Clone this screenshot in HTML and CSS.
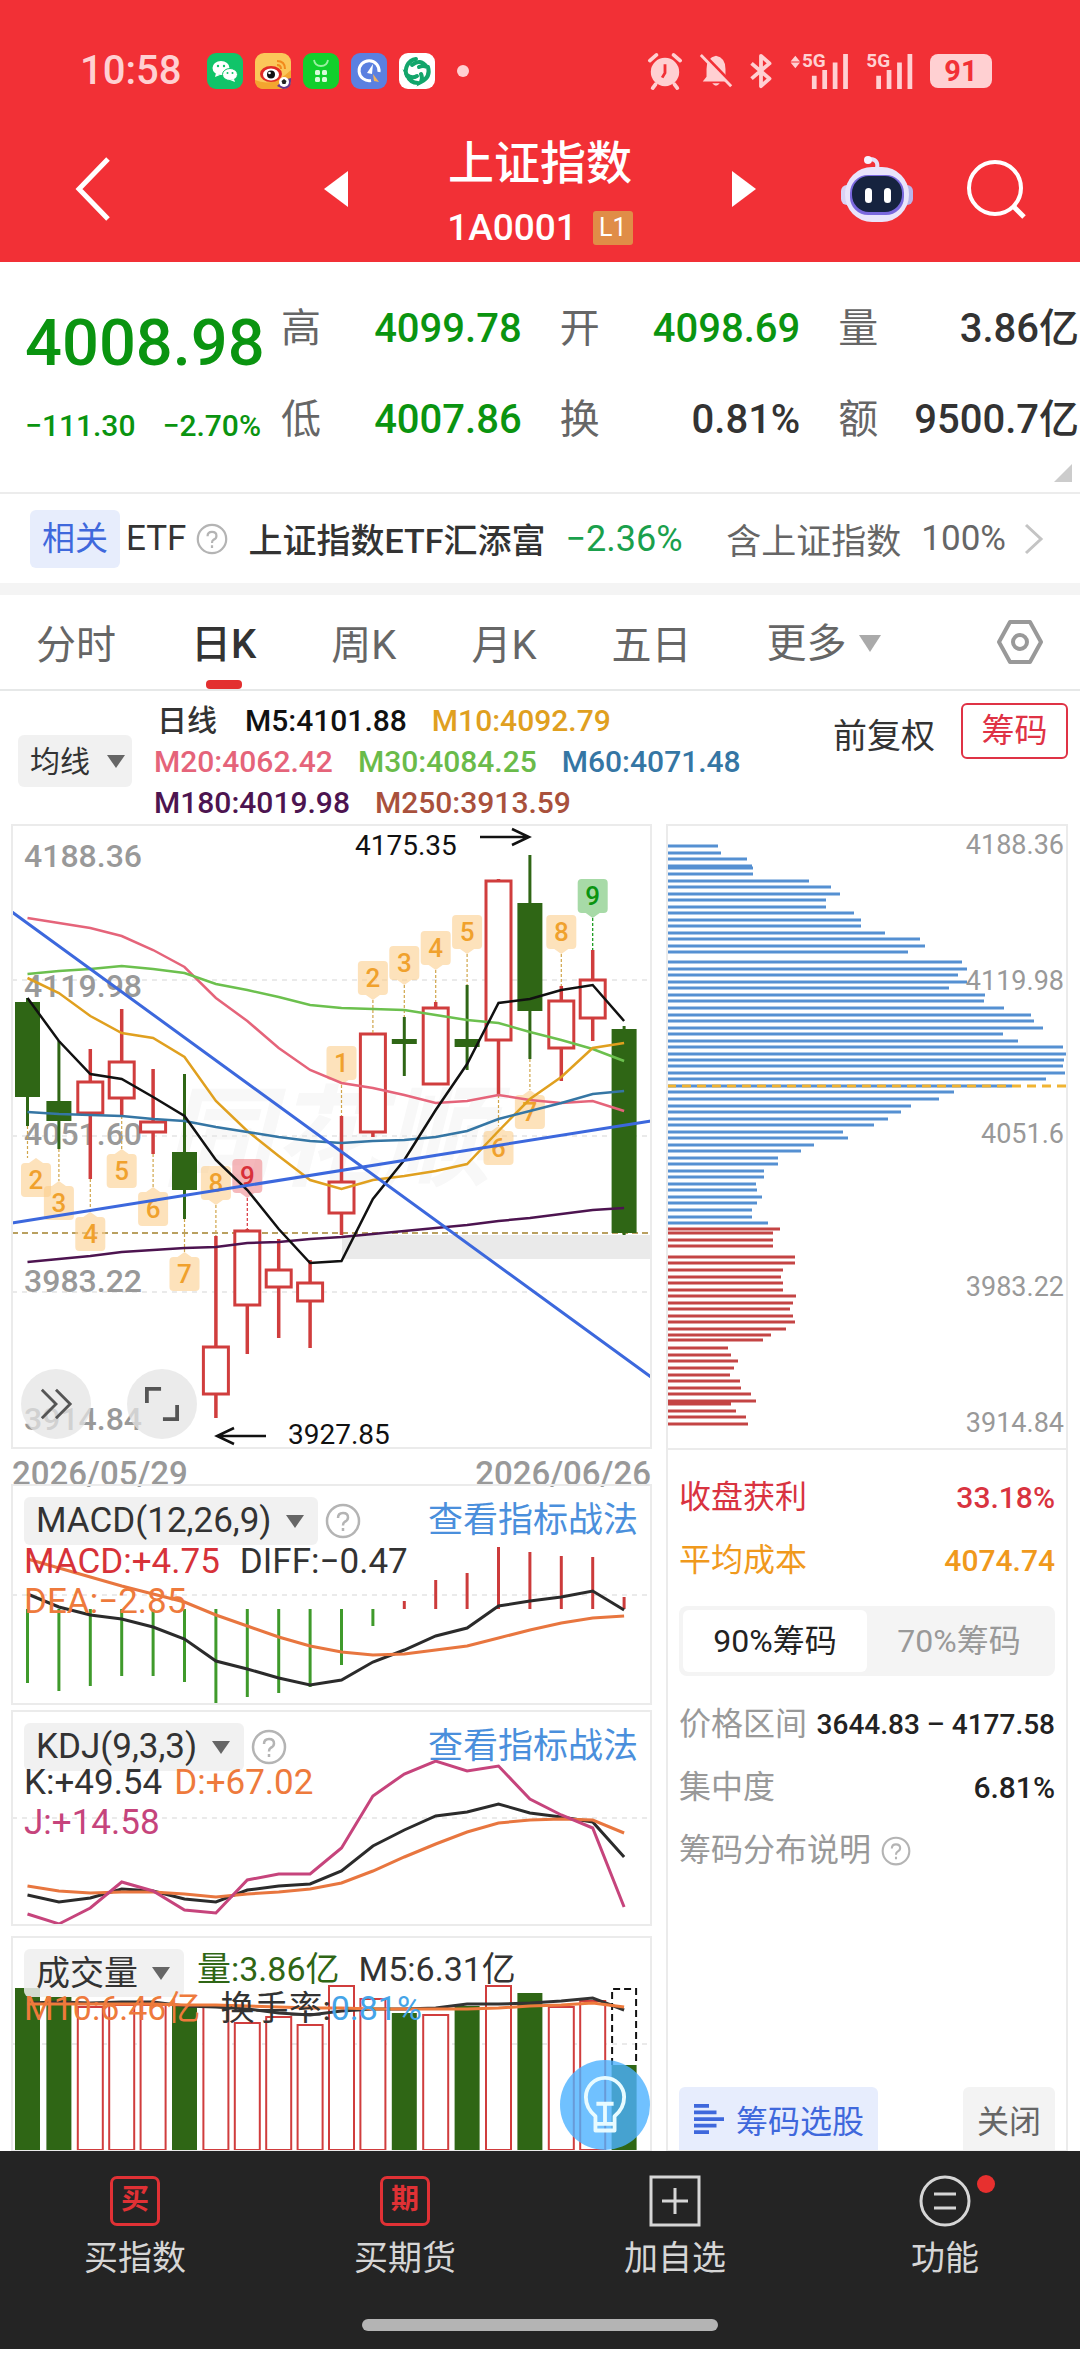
FILE: index.html
```html
<!DOCTYPE html>
<html lang="zh-CN">
<head>
    <meta charset="UTF-8">
    <meta name="viewport" content="width=device-width, initial-scale=1.0">
    <title>上证指数 1A0001</title>
    <link rel="stylesheet" href="styles.css">
</head>
<body>
    <header class="top">
        <div class="status">
            <span class="clock">10:58</span>
            <div class="apps">
                <svg viewBox="0 0 36 36"><rect width="36" height="36" rx="9" fill="#10c469"/><ellipse cx="14" cy="15" rx="8.500" ry="7" fill="#fff"/><ellipse cx="23" cy="21.500" rx="7.500" ry="6" fill="#fff" stroke="#10c469"/><path d="M9 20l-1 4 5-2zM27 26l1 3-5-2z" fill="#fff"/><g fill="#10c469"><circle cx="11" cy="13" r="1.200"/><circle cx="17" cy="13" r="1.200"/><circle cx="20.500" cy="20" r="1"/><circle cx="25.500" cy="20" r="1"/></g></svg>
                <svg viewBox="0 0 36 36"><rect width="36" height="36" rx="9" fill="#fbc75a"/><path d="M0 27q18 8 36-10v10q0 9-9 9H9q-9 0-9-9z" fill="#f3a52f"/><path d="M22 33q6-7 14-8v3q0 8-8 8z" fill="#6a3a8c"/><ellipse cx="16" cy="21" rx="11" ry="8" fill="#e12a26"/><ellipse cx="16" cy="21.500" rx="8" ry="6" fill="#fff"/><circle cx="16" cy="21.500" r="4" fill="#111"/><circle cx="14.500" cy="20" r="1.300" fill="#fff"/><path d="M22 8q8 0 8 8M22 12q4 0 4 4" fill="none" stroke="#f28a1c" stroke-width="2"/><circle cx="29" cy="29" r="5" fill="#fff"/><path d="M29 26l2.500 2-1 3h-3l-1-3z" fill="#222"/></svg>
                <svg viewBox="0 0 36 36"><rect width="36" height="36" rx="9" fill="#12cf2c"/><path d="M11 7q1 6 7 6t7-6" fill="none" stroke="#9bf0a2" stroke-width="1.800"/><g fill="#d8fbda"><rect x="12" y="17" width="5" height="5" rx="1.500"/><rect x="19" y="17" width="5" height="5" rx="1.500"/><rect x="12" y="24" width="5" height="5" rx="1.500"/><rect x="19" y="24" width="5" height="5" rx="1.500"/></g></svg>
                <svg viewBox="0 0 36 36"><rect width="36" height="36" rx="9" fill="#5b80e0"/><path d="M20 27.500A10 10 0 1 1 28 19" fill="none" stroke="#fff" stroke-width="3"/><path d="M22 11l-6 9 5 1z" fill="#fff"/><path d="M22 21l6 8-5-1z" fill="#f3b35a"/></svg>
                <svg viewBox="0 0 36 36"><rect width="36" height="36" rx="9" fill="#fff"/><g fill="none" stroke="#12a56b" stroke-width="4" stroke-linecap="round"><path d="M8 23A12 12 0 0 1 17 6"/><path d="M19 30q-8 0-11-8 5 4 10 1"/><path d="M29 14q3 10-7 15 2-4 0-8"/><path d="M13 12q8-7 15 2-4-2-8 0"/></g></svg>
            </div>
            <i class="dot"></i>
            <div class="signals">
                <svg class="w36" viewBox="0 0 36 38"><circle cx="18" cy="20" r="15" fill="#ffd0d2"/><path d="M2 8l7-6M34 8l-7-6M8 33l-3 4M28 33l3 4" stroke="#ffd0d2" stroke-width="4" stroke-linecap="round"/><path d="M18 12v9l-3 5" stroke="#f23036" stroke-width="3" fill="none"/></svg>
                <svg class="w36" viewBox="0 0 36 38"><path d="M18 3q10 2 10 14v8l4 5H4l4-5v-8Q8 5 18 3zM14 32h8q-4 5-8 0z" fill="#ffd0d2"/><path d="M5 2l32 33" stroke="#f23036" stroke-width="4"/><path d="M2 2l32 33" stroke="#ffd0d2" stroke-width="3"/></svg>
                <svg class="w24" viewBox="0 0 24 38"><path d="M2 11l19 16-9 8V3l9 8L2 27" fill="none" stroke="#ffd0d2" stroke-width="4" stroke-linejoin="round"/></svg>
                <svg class="w62" viewBox="0 0 62 38"><path d="M6 3l5 6H1zM6 16l5-6H1z" fill="#ffd0d2"/><path d="M26 38V24M37 38V18M48 38V10M59 38V1" stroke="#ffd0d2" stroke-width="5"/><text x="13" y="15">5G</text></svg>
                <svg class="w50" viewBox="0 0 50 38"><path d="M13 38V24M24 38V18M35 38V10M46 38V1" stroke="#ffd0d2" stroke-width="5"/><text x="0" y="15">5G</text></svg>
                <span class="battery">91</span>
            </div>
        </div>
        <nav class="titlebar">
            <button class="back" aria-label="返回"><svg viewBox="0 0 34 64"><path d="M32 2L3 32l29 30" fill="none" stroke="#fff" stroke-width="5"/></svg></button>
            <button class="step" aria-label="上一个"><svg viewBox="0 0 24 36"><path d="M24 0v36L0 18z" fill="#fff"/></svg></button>
            <div class="name">
                <h1>上证指数</h1>
                <p>1A0001 <span>L1</span></p>
            </div>
            <button class="step" aria-label="下一个"><svg viewBox="0 0 24 36"><path d="M0 0v36l24-18z" fill="#fff"/></svg></button>
            <div class="tools">
                <button aria-label="助手"><svg class="robot" viewBox="0 0 72 68"><path d="M36 14q2-9-6-10" fill="none" stroke="#e6e1fa" stroke-width="4"/><circle cx="27" cy="5" r="4" fill="#f6f3ff"/><rect x="0" y="30" width="12" height="20" rx="6" fill="#d9d3f5"/><rect x="60" y="30" width="12" height="20" rx="6" fill="#b9b4ea"/><rect x="4" y="12" width="64" height="55" rx="27" fill="#e9e4fb"/><rect x="9" y="20" width="54" height="40" rx="18" fill="#7a68dd"/><rect x="11" y="21" width="50" height="36" rx="17" fill="#16233f"/><rect x="24" y="33" width="7" height="15" rx="3.500" fill="#fff"/><rect x="43" y="33" width="7" height="15" rx="3.500" fill="#fff"/></svg></button>
                <button aria-label="搜索"><svg class="search" viewBox="0 0 60 60"><circle cx="29" cy="29" r="26" fill="none" stroke="#fff" stroke-width="4"/><path d="M47 47l11 11" stroke="#fff" stroke-width="5"/></svg></button>
            </div>
        </nav>
    </header>

    <section class="quote">
        <div class="price">
            <strong>4008.98</strong>
            <p><span>−111.30</span><span>−2.70%</span></p>
        </div>
        <dl class="facts">
            <div><dt>高</dt><dd class="down">4099.78</dd></div>
            <div><dt>开</dt><dd class="down">4098.69</dd></div>
            <div><dt>量</dt><dd>3.86亿</dd></div>
            <div><dt>低</dt><dd class="down">4007.86</dd></div>
            <div><dt>换</dt><dd>0.81%</dd></div>
            <div><dt>额</dt><dd>9500.7亿</dd></div>
        </dl>
        <i class="corner"></i>
    </section>

    <a class="related" href="#">
        <span class="chip">相关</span>
        <span class="etf">ETF</span>
        <svg class="help" viewBox="0 0 36 36"><use href="#help"/></svg>
        <span class="fund">上证指数ETF汇添富</span>
        <span class="rate">−2.36%</span>
        <span class="holds">含上证指数</span>
        <span class="share">100%</span>
        <svg class="go" viewBox="0 0 20 32"><path d="M2 2l15 14L2 30" fill="none" stroke="#c4c4c4" stroke-width="3"/></svg>
    </a>

    <nav class="tabs">
        <button>分时</button>
        <button class="on">日K</button>
        <button>周K</button>
        <button>月K</button>
        <button>五日</button>
        <label class="drop more"><select aria-label="更多周期"><option>更多</option></select><i></i></label>
        <button class="gear" aria-label="设置"><svg viewBox="0 0 48 46"><path d="M14 3h20l11 20-11 20H14L3 23z" fill="none" stroke="#999" stroke-width="4" stroke-linejoin="round"/><circle cx="24" cy="23" r="7" fill="none" stroke="#999" stroke-width="4"/></svg></button>
    </nav>

    <section class="averages">
        <label class="drop"><select aria-label="主图指标"><option>均线</option></select><i></i></label>
        <div class="legend">
            <span class="dark">日线</span><span class="m5">M5:4101.88</span><span class="m10">M10:4092.79</span><br>
            <span class="m20">M20:4062.42</span><span class="m30">M30:4084.25</span><span class="m60">M60:4071.48</span><br>
            <span class="m180">M180:4019.98</span><span class="m250">M250:3913.59</span>
        </div>
        <button class="adjust">前复权</button>
        <button class="chips-btn">筹码</button>
    </section>

    <main class="board">
        <div class="charts">
            <section class="kline">
                <svg id="kline" viewBox="0 0 639 623"></svg>
                <div class="round">
                    <button aria-label="展开"><svg viewBox="0 0 36 36"><path d="M3 3l15 15L3 33M18 3l15 15-15 15" fill="none" stroke="#555" stroke-width="3"/></svg></button>
                    <button aria-label="全屏"><svg viewBox="0 0 36 36"><path d="M2 17V2h15M34 19v15H19" fill="none" stroke="#555" stroke-width="4"/></svg></button>
                </div>
            </section>
            <div class="dates"><span>2026/05/29</span><span>2026/06/26</span></div>

            <section class="sub">
                <svg id="macd" viewBox="0 0 639 219"></svg>
                <div class="sub-head macd">
                    <div class="bar">
                        <label class="drop"><select aria-label="副图指标一"><option>MACD(12,26,9)</option></select><i></i></label>
                        <svg class="help" viewBox="0 0 36 36"><use href="#help"/></svg>
                        <a href="#">查看指标战法</a>
                    </div>
                    <p><span class="red">MACD:+4.75</span><span class="dark">DIFF:−0.47</span><br><span class="orange">DEA:−2.85</span></p>
                </div>
            </section>

            <section class="sub">
                <svg id="kdj" viewBox="0 0 639 214"></svg>
                <div class="sub-head kdj">
                    <div class="bar">
                        <label class="drop"><select aria-label="副图指标二"><option>KDJ(9,3,3)</option></select><i></i></label>
                        <svg class="help" viewBox="0 0 36 36"><use href="#help"/></svg>
                        <a href="#">查看指标战法</a>
                    </div>
                    <p><span class="dark">K:+49.54</span><span class="orange">D:+67.02</span><br><span class="purple">J:+14.58</span></p>
                </div>
            </section>

            <section class="sub last">
                <svg id="vol" viewBox="0 0 639 214"></svg>
                <div class="sub-head vol">
                    <div class="bar">
                        <label class="drop"><select aria-label="副图指标三"><option>成交量</option></select><i></i></label>
                        <span class="green">量:3.86亿</span><span class="dark">M5:6.31亿</span>
                    </div>
                    <p><span class="orange">M10:6.46亿</span><span class="dark">换手率:<b>0.81%</b></span></p>
                </div>
                <button class="bulb" aria-label="提示"><svg viewBox="0 0 46 60"><path d="M13 50V42Q3 34 3 22a20 20 0 0 1 40 0q0 12-10 20v8M13 50h20v7H13zM23 50V29M14 29h18" fill="none" stroke="#e8fbff" stroke-width="4" stroke-linejoin="round"/></svg></button>
            </section>
        </div>

        <aside class="cost">
            <svg id="cost" viewBox="0 0 400 623"></svg>
            <div class="stats">
                <p class="row red"><span>收盘获利</span><b>33.18%</b></p>
                <p class="row gold"><span>平均成本</span><b>4074.74</b></p>
                <div class="switch">
                    <input type="radio" name="range" id="r90" checked><label for="r90">90%筹码</label>
                    <input type="radio" name="range" id="r70"><label for="r70">70%筹码</label>
                </div>
                <p class="row"><span>价格区间</span><b class="small">3644.83 – 4177.58</b></p>
                <p class="row"><span>集中度</span><b>6.81%</b></p>
                <p class="row note"><span>筹码分布说明</span><svg class="help" viewBox="0 0 36 36"><use href="#help"/></svg></p>
            </div>
            <div class="actions">
                <button class="pick"><svg viewBox="0 0 32 32"><path d="M0 2h16M0 9h24M0 16h32M0 23h24M0 30h16" stroke="#3f68dc" stroke-width="4"/></svg>筹码选股</button>
                <button class="close">关闭</button>
            </div>
        </aside>
    </main>

    <footer class="dock">
        <nav>
            <a href="#"><b class="seal">买</b>买指数</a>
            <a href="#"><b class="seal">期</b>买期货</a>
            <a href="#"><svg viewBox="0 0 52 52"><path d="M2 2h48v48H2zM26 13v26M13 26h26" fill="none" stroke="#d6d6d6" stroke-width="3"/></svg>加自选</a>
            <a href="#" class="more-fn"><svg viewBox="0 0 52 52"><circle cx="26" cy="26" r="24" fill="none" stroke="#d6d6d6" stroke-width="3"/><path d="M15 19h22M15 33h22" stroke="#d6d6d6" stroke-width="3"/></svg>功能</a>
        </nav>
        <div class="home"></div>
    </footer>

    <svg class="defs">
        <symbol id="help" viewBox="0 0 36 36">
            <circle cx="18" cy="18" r="16" fill="none" stroke="currentColor" stroke-width="2.500"/>
            <path d="M13 15q0-5 5-5t5 4.500q0 3-3.500 4.500Q18 20 18 22.500M18 25v3" fill="none" stroke="currentColor" stroke-width="2.500"/>
        </symbol>
    </svg>
    <script src="charts.js"></script>
</body>
</html>
```
FILE: styles.css
```css
* {
    box-sizing: border-box;
}

body {
    margin: 0;
    background: #fff;
    color: #333;
    font-family: Roboto, "Noto Sans CJK SC", sans-serif;
    font-size: 32px;
}

h1, p, dl, dd {
    margin: 0;
}

button, select {
    font: inherit;
    color: inherit;
    background: none;
    border: 0;
    padding: 0;
    margin: 0;
}

a {
    color: inherit;
    text-decoration: none;
}

svg {
    display: block;
    flex: none;
    overflow: visible;
}

.defs {
    display: none;
}

.help {
    width: 36px;
    height: 36px;
    color: #b4b4b4;
}

/* drop-down chip */
.drop {
    display: inline-grid;
    grid-template-columns: auto;
    align-items: center;
    background: rgba(238, 238, 238, 0.85);
    border-radius: 6px;
}

.drop select {
    grid-area: 1 / 1;
    appearance: none;
    padding: 0 46px 0 12px;
    height: 48px;
}

.drop i {
    grid-area: 1 / 1;
    justify-self: end;
    margin-right: 14px;
    border: 9px solid transparent;
    border-top: 13px solid #666;
    border-bottom: 0;
    pointer-events: none;
}

/* header */
.top {
    background: #f23036;
    color: #fff;
    height: 262px;
}

.status {
    display: flex;
    align-items: center;
    height: 96px;
    padding: 46px 88px 0 80px;
    color: #ffd0d2;
}

.clock {
    font-size: 40px;
    font-weight: 500;
    line-height: 50px;
    width: 127px;
}

.apps {
    display: flex;
    gap: 12px;
}

.apps svg {
    width: 36px;
    height: 36px;
}

.dot {
    width: 12px;
    height: 12px;
    border-radius: 50%;
    background: #ffd0d2;
    margin-left: 22px;
}

.signals {
    display: flex;
    align-items: center;
    gap: 15px;
    margin-left: auto;
}

.signals svg {
    height: 36px;
}

.signals text {
    font-size: 20px;
    font-weight: 700;
    fill: #ffd0d2;
}

.w36 { width: 36px; }
.w24 { width: 24px; }
.w62 { width: 62px; }
.w50 { width: 50px; }

.battery {
    width: 62px;
    height: 34px;
    border-radius: 8px;
    background: #ffd0d2;
    color: #f23036;
    font-size: 29px;
    font-weight: 700;
    line-height: 34px;
    text-align: center;
}

.titlebar {
    display: grid;
    grid-template-columns: 1fr 24px 384px 24px 1fr;
    align-items: center;
    height: 166px;
    padding: 20px 54px 0;
}

.titlebar svg {
    height: 100%;
}

.back {
    width: 34px;
    height: 64px;
    margin-left: 22px;
}

.step {
    height: 36px;
}

.name {
    padding-top: 12px;
    text-align: center;
}

.name h1 {
    font-size: 46px;
    font-weight: 500;
    line-height: 66px;
}

.name p {
    display: flex;
    justify-content: center;
    align-items: center;
    gap: 16px;
    font-size: 37px;
    font-weight: 500;
    line-height: 64px;
}

.name span {
    width: 40px;
    background: #e08d47;
    border-radius: 3px;
    font-size: 25px;
    font-weight: 400;
    line-height: 34px;
}

.tools {
    display: flex;
    justify-content: flex-end;
    align-items: center;
    gap: 53px;
}

.robot {
    width: 72px;
}

.search {
    width: 60px;
}

/* quote */
.quote {
    position: relative;
    display: flex;
    gap: 20px;
    height: 232px;
    padding: 0 1px 0 25px;
    border-bottom: 2px solid #ececec;
}

.price {
    width: 236px;
    padding-top: 37px;
    color: #0a9410;
    font-weight: 500;
}

.price strong {
    display: block;
    font-size: 65px;
    font-weight: 500;
    line-height: 88px;
}

.price p {
    display: flex;
    justify-content: space-between;
    font-size: 30px;
    line-height: 78px;
}

.facts {
    flex: 1;
    display: grid;
    grid-template-columns: repeat(3, 1fr);
    grid-auto-rows: 91px;
    column-gap: 38px;
    padding-top: 21px;
    font-size: 40px;
    line-height: 91px;
    white-space: nowrap;
}

.facts div {
    display: flex;
    justify-content: space-between;
}

.facts dt {
    color: #666;
}

.facts dd {
    font-weight: 500;
}

.facts .down {
    color: #0a9410;
}

.corner {
    position: absolute;
    right: 8px;
    bottom: 10px;
    border-left: 18px solid transparent;
    border-bottom: 18px solid #ccc;
}

/* related fund */
.related {
    display: flex;
    align-items: center;
    height: 101px;
    padding: 0 36px 0 30px;
    border-bottom: 12px solid #f4f4f4;
    font-size: 33px;
    white-space: nowrap;
}

.chip {
    padding: 0 12px;
    border-radius: 6px;
    background: #e7edfc;
    color: #3f68dc;
    line-height: 58px;
}

.etf {
    margin: 0 10px 0 6px;
    font-size: 35px;
}

.related .help {
    width: 32px;
    height: 32px;
}

.fund {
    margin-left: 20px;
    font-size: 34px;
    font-weight: 500;
}

.rate {
    margin: 0 auto 0 20px;
    color: #1aa04c;
    font-size: 36px;
}

.holds, .share {
    color: #666;
    font-size: 35px;
}

.share {
    margin: 0 18px 0 20px;
}

.go {
    width: 20px;
}

/* period tabs */
.tabs {
    display: flex;
    align-items: stretch;
    gap: 75px;
    height: 96px;
    padding: 0 36px;
    border-bottom: 2px solid #e6e8e8;
    color: #666;
    font-size: 40px;
}

.tabs button {
    display: grid;
    align-content: center;
    justify-items: center;
}

.tabs .on {
    color: #333;
    font-weight: 500;
    align-content: end;
    line-height: 60px;
}

.tabs .on::after {
    content: "";
    width: 36px;
    height: 9px;
    margin-top: 5px;
    border-radius: 4px;
    background: #e32f2f;
}

.drop.more {
    background: none;
    padding-top: 3px;
}

.drop.more select {
    padding: 0 34px 0 0;
    height: 60px;
}

.drop.more i {
    margin-right: 0;
    border-width: 17px 11px 0;
    border-top-color: #aaa;
}

.gear {
    margin-left: auto;
}

.gear svg {
    width: 48px;
}

/* moving averages */
.averages {
    display: flex;
    align-items: flex-start;
    height: 133px;
    padding: 9px 12px 0 18px;
    font-size: 30px;
}

.averages .drop {
    width: 114px;
    margin: 35px 22px 0 0;
}

.averages .drop select {
    height: 52px;
}

.averages .drop i {
    margin-right: 11px;
}

.legend {
    flex: 1;
    font-weight: 500;
    line-height: 41px;
    white-space: nowrap;
}

.legend span {
    margin-right: 25px;
}

.dark { color: #333; }
.m5 { color: #111; }
.m10 { color: #e0a01f; }
.m20 { color: #e5647a; }
.m30 { color: #6abb4a; }
.m60 { color: #3576a4; }
.m180 { color: #4d1450; }
.m250 { color: #a9513c; }
.red { color: #d73239; }
.green { color: #2f6615; }
.orange { color: #ee7a3c; }
.purple { color: #c6447c; }

.legend .dark {
    margin: 0 28px 0 3px;
}

.adjust {
    font-size: 34px;
    line-height: 72px;
}

.chips-btn {
    width: 107px;
    height: 56px;
    margin: 3px 0 0 26px;
    border: 2px solid #df3245;
    border-radius: 6px;
    color: #df3245;
    font-size: 33px;
    line-height: 50px;
}

/* chart board */
.board {
    display: grid;
    grid-template-columns: minmax(0, 639fr) minmax(0, 400fr);
    gap: 16px;
    padding: 1px 13px 0 12px;
}

.charts > section,
.cost {
    outline: 2px solid #ebebeb;
    outline-offset: -1px;
}

.charts > section {
    display: grid;
}

.charts section > * {
    grid-area: 1 / 1;
}

.charts section > svg,
.cost > svg {
    width: 100%;
}

.round {
    align-self: end;
    display: flex;
    gap: 36px;
    padding: 0 0 9px 9px;
}

.round button {
    display: grid;
    place-content: center;
    width: 70px;
    height: 70px;
    border-radius: 50%;
    background: rgba(228, 228, 228, 0.75);
}

.round svg {
    width: 34px;
}

.dates {
    display: flex;
    justify-content: space-between;
    color: #999;
    font-size: 33px;
    font-weight: 500;
    line-height: 52px;
    height: 37px;
}

.sub {
    position: relative;
    margin-bottom: 7px;
}

.sub + .sub.last {
    margin: 12px 0 0;
}

.sub-head {
    padding: 12px 13px 0 12px;
    font-size: 35px;
    line-height: 40px;
}

.sub-head .bar {
    display: flex;
    align-items: center;
    gap: 7px;
    height: 48px;
}

.sub-head a {
    margin-left: auto;
    color: #4a8fdc;
}

.sub-head p {
    margin-top: -3px;
}

.sub-head p span {
    margin-right: 20px;
}

.kdj p {
    margin-top: -8px;
}

.kdj p span {
    margin-right: 12px;
}

.vol {
    font-size: 34px;
}

.vol p {
    margin-top: -9px;
}

.vol .bar .green {
    margin: 0 12px 8px 6px;
}

.vol .bar .dark {
    margin-bottom: 8px;
}

.vol b {
    color: #45a4e8;
    font-weight: 400;
}

.bulb {
    position: absolute;
    right: 1px;
    bottom: 1px;
    display: grid;
    place-content: center;
    width: 90px;
    height: 90px;
    border-radius: 50%;
    background: rgba(76, 178, 255, 0.8);
}

.bulb svg {
    width: 44px;
}

/* chart lettering */
.axis {
    fill: #999;
    font-size: 32px;
    font-weight: 500;
}

.axis-small {
    fill: #999;
    font-size: 27px;
}

.mark {
    fill: #111;
    font-size: 28px;
}

.tag {
    font-size: 26px;
    font-weight: 500;
}

.brand {
    fill: #f8f8f8;
    font-size: 110px;
    font-style: italic;
    font-weight: 700;
}

/* cost distribution */
.cost {
    display: flex;
    flex-direction: column;
}

.stats {
    padding: 16px 12px 0;
    border-top: 2px solid #ebebeb;
}

.row {
    display: flex;
    justify-content: space-between;
    align-items: center;
    line-height: 63px;
    color: #999;
    white-space: nowrap;
}

.row b {
    color: #222;
    font-size: 30px;
    font-weight: 500;
}

.row .small {
    font-size: 28px;
}

.row.red, .row.red b {
    color: #d93340;
}

.row.gold, .row.gold b {
    color: #f0991c;
}

.row.note {
    justify-content: flex-start;
    gap: 10px;
}

.row .help {
    width: 30px;
    height: 30px;
}

.switch {
    display: grid;
    grid-template-columns: 1fr 1fr;
    margin: 14px 0 17px;
    padding: 4px;
    border-radius: 8px;
    background: #f4f4f4;
    line-height: 62px;
    text-align: center;
    color: #999;
}

.switch input {
    position: absolute;
    opacity: 0;
}

.switch input:checked + label {
    background: #fff;
    border-radius: 6px;
    color: #222;
}

.actions {
    display: flex;
    justify-content: space-between;
    margin-top: auto;
    padding: 0 12px;
}

.actions button {
    height: 64px;
    padding: 0 14px;
    border-radius: 6px 6px 0 0;
}

.pick {
    display: flex;
    align-items: center;
    gap: 11px;
    background: #e7edfd;
    color: #3f68dc;
}

.pick svg {
    width: 32px;
    height: 30px;
}

.actions .close {
    background: #f3f3f3;
    color: #666;
}

/* bottom dock */
.dock {
    position: relative;
    background: #242424;
    color: #d6d6d6;
    padding: 24px 0 18px;
}

.dock nav {
    display: grid;
    grid-template-columns: repeat(4, 1fr);
}

.dock a {
    display: grid;
    justify-items: center;
    gap: 6px;
    font-size: 34px;
    line-height: 50px;
}

.dock svg {
    width: 52px;
    height: 52px;
}

.seal {
    width: 50px;
    height: 50px;
    margin: 1px;
    border: 3px solid #e03135;
    border-radius: 7px;
    color: #e03135;
    font-size: 28px;
    line-height: 42px;
    text-align: center;
}

.more-fn {
    position: relative;
}

.more-fn::after {
    content: "";
    position: absolute;
    top: 0;
    left: 50%;
    width: 18px;
    height: 18px;
    margin-left: 32px;
    border-radius: 50%;
    background: #e7302f;
}

.home {
    width: 33%;
    height: 12px;
    margin: 36px auto 0;
    border-radius: 6px;
    background: #b4b4b4;
}
```
FILE: charts.js
```js
const RED = '#d03d3d';
const GREEN = '#2f6615';
const cx = i => 15.5 + 31.4 * i;

const line = (ys, color, w = 3) =>
    `<polyline points="${ys.map((y, i) => cx(i) + ',' + y).join(' ')}" fill="none" stroke="${color}" stroke-width="${w}"/>`;
const path = (d, color, w, extra = '') =>
    `<path d="${d}" fill="none" stroke="${color}" stroke-width="${w}" ${extra}/>`;
const grid = y => path(`M0 ${y}H639`, '#e4e4e4', 1.5, 'stroke-dasharray="5 5"');

// direction, high, body top, body bottom, low
const candles = [
    ['g', 173, 177, 272, 301], ['g', 216, 276, 296, 324], ['r', 224, 257, 288, 354], ['r', 184, 237, 273, 291],
    ['r', 244, 297, 307, 329], ['g', 249, 327, 365, 394], ['r', 411, 522, 569, 593], ['r', 404, 406, 480, 529],
    ['r', 414, 445, 462, 513], ['r', 435, 458, 476, 523], ['r', 291, 357, 388, 410], ['r', 208, 209, 307, 312],
    ['g', 192, 214, 219, 251], ['r', 177, 183, 259, 260], ['g', 160, 214, 222, 245], ['r', 54, 56, 215, 270],
    ['g', 30, 78, 186, 234], ['r', 161, 176, 223, 256], ['r', 125, 155, 193, 216], ['g', 201, 204, 408, 410]
];

const averages = {
    '#e5647a': [93, 98, 103, 111, 125, 142, 173, 196, 223, 245, 258, 263, 270, 278, 276, 270, 275, 278, 276, 286],
    '#6cc04e': [149, 146, 144, 141, 144, 148, 159, 165, 172, 180, 183, 184, 185, 190, 195, 198, 207, 215, 224, 236],
    '#e0a01f': [153, 168, 191, 208, 213, 232, 276, 306, 331, 355, 364, 355, 351, 346, 339, 306, 274, 252, 223, 218],
    '#3576a4': [287, 289, 290, 291, 294, 296, 302, 307, 312, 316, 318, 316, 315, 312, 306, 294, 286, 278, 269, 266],
    '#4d1450': [437, 434, 431, 427, 425, 423, 422, 418, 417, 414, 412, 409, 406, 403, 400, 396, 393, 389, 385, 383],
    '#111': [173, 216, 249, 254, 272, 291, 335, 365, 404, 438, 436, 374, 335, 285, 239, 178, 174, 165, 160, 196]
};

// candle index, digit, box top, side of the candle
const tags = [
    [0, 2, 338, 'below'], [1, 3, 361, 'below'], [2, 4, 392, 'below'], [3, 5, 329, 'below'], [4, 6, 367, 'below'],
    [5, 7, 432, 'below'], [6, 8, 341, 'above'], [7, 9, 334, 'above', '#d8303a', '#f08a8f'], [10, 1, 221, 'above'],
    [11, 2, 136, 'above'], [12, 3, 121, 'above'], [13, 4, 106, 'above'], [14, 5, 90, 'above'], [15, 6, 306, 'below'],
    [16, 7, 270, 'below'], [17, 8, 90, 'above'], [18, 9, 54, 'above', '#0a9410', '#6dc26d']
];

function candle([dir, high, top, bottom, low], i) {
    const x = cx(i);
    if (dir === 'g') {
        return path(`M${x} ${high}V${low}`, GREEN, 3) +
            `<rect x="${x - 12.5}" y="${top}" width="25" height="${bottom - top}" fill="${GREEN}"/>`;
    }
    return path(`M${x} ${high}V${top}M${x} ${bottom}V${low}`, RED, 3.5) +
        `<rect x="${x - 12.5}" y="${top}" width="25" height="${bottom - top}" fill="#fff" stroke="${RED}" stroke-width="3"/>`;
}

function tag([i, digit, y, side, color = '#f0a12d', fill = '#fccf8e']) {
    const x = Math.max(cx(i), 24);
    const below = side === 'below';
    const tip = below ? `M${x - 7} ${y}l7-5 7 5z` : `M${x - 7} ${y + 34}l7 5 7-5z`;
    const leader = below ? `M${cx(i)} ${candles[i][4]}V${y - 5}` : `M${cx(i)} ${y + 39}V${candles[i][1]}`;
    return path(leader, digit === 9 ? color : '#d0a54a', 1.2, 'stroke-dasharray="3 2"') +
        `<g fill="${fill}" opacity="0.6"><rect x="${x - 15}" y="${y}" width="30" height="34" rx="4"/><path d="${tip}"/></g>` +
        `<text class="tag" x="${x}" y="${y + 26}" text-anchor="middle" fill="${color}">${digit}</text>`;
}

document.getElementById('kline').innerHTML =
    `<text class="brand" x="150" y="352">同花顺</text>` +
    grid(155) + grid(311) + grid(467) +
    `<rect x="330" y="410" width="309" height="24" fill="#eaeaea"/>` +
    [['4188.36', 42], ['4119.98', 172], ['4051.60', 320], ['3983.22', 467], ['3914.84', 605]]
        .map(([t, y]) => `<text class="axis" x="12" y="${y}">${t}</text>`).join('') +
    path('M0 408H639', '#b9a060', 1.8, 'stroke-dasharray="6 4"') +
    candles.map(candle).join('') +
    tags.map(tag).join('') +
    Object.entries(averages).map(([c, ys]) => line(ys, c, 2.5)).join('') +
    path('M0 87L639 552M0 398L639 296', '#3c68dd', 3) +
    `<text class="mark" x="343" y="30">4175.35</text>` +
    path('M468 12H517M500 4l17 8-17 8', '#111', 2.5) +
    `<text class="mark" x="276" y="619">3927.85</text>` +
    path('M254 611H205M222 603l-17 8 17 8', '#111', 2.5);

// MACD
const macd = [198, 206, 201, 191, 191, 197, 219, 212, 208, 202, 180, 141, 116, 95, 88, 62, 67, 71, 72, 112];
document.getElementById('macd').innerHTML =
    grid(110) +
    macd.map((y, i) => path(`M${cx(i)} 124V${y}`, y > 124 ? '#3f9a2b' : '#cc3b3b', 3)).join('') +
    line([109, 122, 130, 134, 142, 154, 176, 184, 193, 200, 195, 177, 165, 151, 143, 121, 116, 112, 106, 125], '#2b2b2b') +
    line([74, 83, 92, 101, 109, 117, 130, 141, 152, 161, 167, 170, 169, 165, 161, 153, 145, 138, 133, 131], '#e8763f');

// KDJ
document.getElementById('kdj').innerHTML =
    grid(107) +
    line([184, 191, 187, 178, 180, 188, 191, 179, 175, 173, 160, 135, 119, 105, 101, 93, 102, 106, 111, 146], '#2b2b2b') +
    line([175, 180, 182, 181, 181, 183, 186, 183, 181, 178, 172, 160, 146, 133, 121, 112, 109, 108, 109, 122], '#e8763f') +
    line([203, 213, 197, 171, 180, 199, 202, 169, 163, 163, 137, 85, 63, 50, 60, 55, 88, 104, 117, 196], '#c6447c');

// volume, last bar is the full-day estimate
const volume = [51, 60, 70, 68, 68, 67, 70, 86, 80, 88, 49, 62, 76, 78, 69, 49, 56, 70, 64, 128];
const falling = [0, 1, 5, 12, 14, 16, 19];
document.getElementById('vol').innerHTML =
    grid(107) +
    volume.map((y, i) => falling.includes(i)
        ? `<rect x="${cx(i) - 12.5}" y="${y}" width="25" height="${214 - y}" fill="${GREEN}"/>`
        : `<rect x="${cx(i) - 12.5}" y="${y}" width="25" height="${213 - y}" fill="#fff" stroke="${RED}" stroke-width="2"/>`
    ).join('') +
    path(`M${cx(19) - 12} 128V52H${cx(19) + 12}V128`, '#111', 2, 'stroke-dasharray="7 4"') +
    line([66, 65, 66, 65, 65, 69, 70, 72, 76, 78, 74, 72, 72, 71, 67, 67, 66, 64, 61, 73], '#333') +
    line([67, 67, 67, 67, 67, 68, 68, 69, 70, 71, 71, 72, 72, 72, 72, 71, 69, 68, 66, 70], '#ee7a3c');

// cost distribution: y, length
const trapped = [
    [21, 51], [28, 54], [34, 80], [41, 85], [43, 86], [49, 86], [56, 142], [62, 164], [69, 173], [75, 159], [82, 159],
    [88, 187], [95, 194], [101, 194], [108, 218], [114, 253], [121, 258], [127, 241], [137, 295], [144, 300],
    [150, 291], [157, 300], [163, 282], [170, 318], [176, 317], [183, 337], [190, 364], [196, 367], [203, 376],
    [209, 336], [216, 351], [222, 396], [229, 400], [235, 397], [241, 396], [248, 398], [254, 379], [261, 345],
    [267, 287], [274, 272], [281, 244], [287, 234], [294, 221], [300, 207], [307, 176], [313, 181], [320, 147],
    [326, 134], [333, 111], [339, 111], [346, 97], [352, 97], [359, 89], [365, 90], [372, 95], [378, 90],
    [385, 85], [392, 85], [398, 101]
];
const winning = [
    [404, 113], [408, 106], [415, 106], [421, 106], [432, 128], [438, 128], [445, 116], [452, 114], [458, 116],
    [465, 116], [471, 129], [478, 126], [484, 123], [491, 126], [497, 128], [504, 119], [510, 104], [515, 96],
    [523, 61], [530, 64], [536, 71], [543, 67], [550, 63], [556, 73], [563, 74], [569, 84], [576, 89], [579, 64],
    [586, 69], [592, 79], [599, 81]
];
const bars = list => list.map(([y, w]) => `M0 ${y}h${w}`).join('');
document.getElementById('cost').innerHTML =
    path(bars(trapped), '#5590d2', 3) +
    path(bars(winning), '#c44444', 3) +
    path('M0 261H400', '#f0b432', 3, 'stroke-dasharray="9 6"') +
    [['4188.36', 29], ['4119.98', 165], ['4051.6', 318], ['3983.22', 471], ['3914.84', 607]]
        .map(([t, y]) => `<text class="axis-small" x="397" y="${y}" text-anchor="end">${t}</text>`).join('');
```
